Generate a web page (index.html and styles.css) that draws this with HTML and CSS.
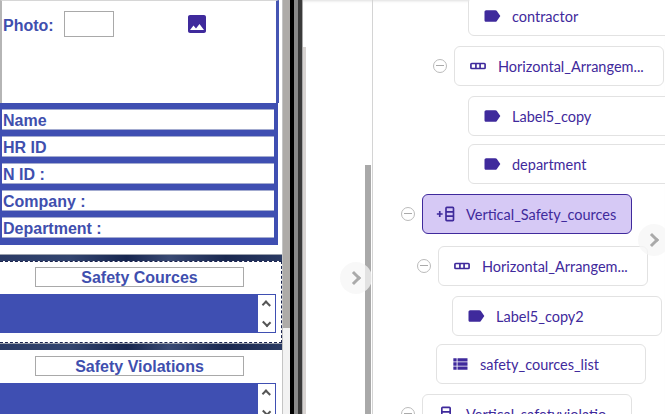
FILE: index.html
```html
<!DOCTYPE html>
<html lang="en">

<head>
  <meta charset="UTF-8" />
  <title>Safety form</title>
  <link rel="stylesheet" href="styles.css">
</head>

<body>
  <div class="page">
    <div class="form-pane">
      <div class="photo-box">
        <span class="field-label">Photo:</span>
        <span class="photo-input"></span>
        <svg class="photo-icon" viewBox="0 0 24 24" width="24" height="24">
          <path d="M21 19V5c0-1.100-.9-2-2-2H5c-1.100 0-2 .9-2 2v14c0 1.100.9 2 2 2h14c1.100 0 2-.9 2-2zM8.500 13.500l2.500 3.010L14.500 12l4.500 6H5l3.500-4.500z" />
        </svg>
      </div>
      <div class="fields">
        <div class="field-row">Name</div>
        <div class="field-row">HR ID</div>
        <div class="field-row">N ID :</div>
        <div class="field-row">Company :</div>
        <div class="field-row">Department :</div>
      </div>
      <div class="dark-band"></div>
      <div class="section selected">
        <div class="section-title">Safety Cources</div>
        <div class="list-box">
          <div class="list-scroll"><span class="arrow up"></span><span class="arrow down"></span></div>
        </div>
      </div>
      <div class="dark-band"></div>
      <div class="section">
        <div class="section-title">Safety Violations</div>
        <div class="list-box">
          <div class="list-scroll"><span class="arrow up"></span><span class="arrow down"></span></div>
        </div>
      </div>
    </div>

    <div class="pane-scroll"></div>
    <div class="splitter"></div>

    <div class="tree-pane">
      <div class="gutter">
        <div class="gutter-thumb"></div>
      </div>
      <div class="tree">
        <div class="node indent-95">
          <svg class="icon" viewBox="0 0 24 24"><use href="#ic-label" /></svg>
          <span>contractor</span>
        </div>
        <div class="node indent-81">
          <span class="toggle"></span>
          <svg class="icon" viewBox="0 0 24 24"><use href="#ic-hbox" /></svg>
          <span>Horizontal_Arrangem...</span>
        </div>
        <div class="node indent-95 gap-8">
          <svg class="icon" viewBox="0 0 24 24"><use href="#ic-label" /></svg>
          <span>Label5_copy</span>
        </div>
        <div class="node indent-95">
          <svg class="icon" viewBox="0 0 24 24"><use href="#ic-label" /></svg>
          <span>department</span>
        </div>
        <div class="node indent-49 active">
          <span class="toggle"></span>
          <svg class="icon" viewBox="0 0 24 24"><use href="#ic-vbox" /></svg>
          <span>Vertical_Safety_cources</span>
        </div>
        <div class="node indent-65">
          <span class="toggle"></span>
          <svg class="icon" viewBox="0 0 24 24"><use href="#ic-hbox" /></svg>
          <span>Horizontal_Arrangem...</span>
        </div>
        <div class="node indent-79 gap-8">
          <svg class="icon" viewBox="0 0 24 24"><use href="#ic-label" /></svg>
          <span>Label5_copy2</span>
        </div>
        <div class="node indent-63">
          <svg class="icon" viewBox="0 0 24 24"><use href="#ic-list" /></svg>
          <span>safety_cources_list</span>
        </div>
        <div class="node indent-49">
          <span class="toggle"></span>
          <svg class="icon" viewBox="0 0 24 24"><use href="#ic-vbox-plain" /></svg>
          <span>Vertical_safetyviolatio</span>
        </div>
      </div>
      <div class="pager pager-left"><span class="chev"></span></div>
      <div class="pager pager-right"><span class="chev"></span></div>
    </div>
  </div>

  <svg class="defs" width="0" height="0">
    <defs>
      <symbol id="ic-label" viewBox="0 0 24 24">
        <path fill="currentColor" d="M17.630 5.840C17.270 5.330 16.670 5 16 5L5 5.010C3.900 5.010 3 5.900 3 7v10c0 1.100.9 1.990 2 1.990L16 19c.67 0 1.270-.33 1.630-.84L22 12l-4.370-6.160z" />
      </symbol>
      <symbol id="ic-hbox" viewBox="0 0 24 24">
        <rect x="3.500" y="9" width="17" height="6" rx="1" fill="none" stroke="currentColor" stroke-width="2" />
        <path d="M9.500 9v6M14.500 9v6" stroke="currentColor" stroke-width="2" />
      </symbol>
      <symbol id="ic-vbox" viewBox="0 0 24 24">
        <rect x="12" y="4" width="9" height="16" rx="1" fill="none" stroke="currentColor" stroke-width="2" />
        <path d="M12 9.500h9M12 14.500h9M1 12h7M4.500 8.500v7" fill="none" stroke="currentColor" stroke-width="2" />
      </symbol>
      <symbol id="ic-vbox-plain" viewBox="0 0 24 24">
        <rect x="7" y="4" width="10" height="16" rx="1" fill="none" stroke="currentColor" stroke-width="2" />
        <path d="M7 9.500h10M7 14.500h10" fill="none" stroke="currentColor" stroke-width="2" />
      </symbol>
      <symbol id="ic-list" viewBox="0 0 24 24">
        <path fill="currentColor" d="M4 14h4v-4H4v4zm0 5h4v-4H4v4zM4 9h4V5H4v4zm5 5h12v-4H9v4zm0 5h12v-4H9v4zM9 5v4h12V5H9z" />
      </symbol>
    </defs>
  </svg>
</body>

</html>
```

FILE: styles.css
```css
html,
body {
  margin: 0;
  height: 100%;
  overflow: hidden;
  background: #fff;
}

.page {
  display: flex;
  width: 665px;
  height: 414px;
  overflow: hidden;
}

/* left form */
.form-pane {
  width: 282px;
  flex: none;
  border-right: 1px solid #c4c4c4;
  font-family: "Liberation Sans", Arial, sans-serif;
  font-weight: bold;
  color: #3f4fae;
  overflow: hidden;
}

.photo-box {
  display: flex;
  align-items: flex-start;
  width: 274px;
  height: 102px;
  border-top: 1px solid #d6d6d6;
  border-left: 2px solid #b5b5b5;
  border-right: 3px solid #4555b3;
  margin-right: 3px;
}

.field-label {
  margin: 16px 0 0 1px;
  font-size: 16px;
  line-height: 18px;
}

.photo-input {
  width: 48px;
  height: 24px;
  margin: 10px 0 0 10px;
  border: 1px solid #a9a9a9;
}

.photo-icon {
  margin: 11px 0 0 71px;
  fill: #3f2a9c;
}

.fields {
  display: flow-root;
  width: 278px;
  padding-top: 7px;
  background: #3f4fb2;
  box-sizing: border-box;
}

.field-row {
  width: 271px;
  height: 19px;
  margin: 0 3px 7px 2px;
  padding-left: 1px;
  background: #fff;
  border-bottom: 1px solid #a3abd0;
  box-shadow: 0 -1px 0 #a3abd0;
  font-size: 16px;
  line-height: 22px;
}

.dark-band {
  height: 6px;
  margin-top: 9px;
  border-top: 1px solid #9aa0ad;
  background: linear-gradient(to right, #2b3b66, #33456f 25%, #17264f 45%, #3a4a73 60%, #1a2850 80%, #2a3a63);
}

.section + .dark-band {
  margin-top: 0;
}

.section {
  height: 80px;
  padding-top: 6px;
  box-sizing: border-box;
}

.section.selected {
  border-top: 1px dashed #1c2550;
  border-bottom: 1px dashed #1c2550;
  border-right: 1px dashed #1c2550;
  height: 82px;
  padding-top: 5px;
}

.section-title {
  width: 207px;
  height: 18px;
  margin-left: 35px;
  border: 1px solid #a9a9a9;
  font-size: 16px;
  line-height: 20px;
  text-align: center;
}

.list-box {
  display: flex;
  justify-content: flex-end;
  width: 276px;
  height: 39px;
  margin-top: 7px;
  background: #3f4fb2;
}

.list-scroll {
  display: flex;
  flex-direction: column;
  justify-content: space-between;
  align-items: center;
  width: 17px;
  height: 35px;
  padding: 1px 0;
  border: 1px solid #3f4fb2;
  border-left: 0;
  background: #fff;
}

.arrow {
  width: 5px;
  height: 5px;
  margin: 6px 0;
  border-top: 2px solid #555;
  border-left: 2px solid #555;
}

.arrow.up {
  transform: rotate(45deg);
}

.arrow.down {
  transform: rotate(225deg);
}

/* scrollbar and splitter */
.pane-scroll {
  width: 7px;
  flex: none;
  background: linear-gradient(to bottom, #aeaba8 0, #aeaba8 328px, #f2f2f2 328px);
}

.splitter {
  width: 13px;
  flex: none;
  background: linear-gradient(to right, #000 0 4px, #8a8a8a 4px 8px, #3a3a3a 8px 12px, #aaa 12px 13px);
}

/* tree */
.tree-pane {
  position: relative;
  flex: 1;
  display: flex;
  overflow: hidden;
  font-family: Lato, "Noto Sans", sans-serif;
  color: #3f2a9c;
  box-shadow: inset 0 3px 3px -2px #ddd;
}

.gutter {
  width: 70px;
  flex: none;
  box-sizing: border-box;
  padding: 165px 0 0 62px;
  border-right: 1px solid #d4d4d4;
  background: linear-gradient(#d8d4d2, #d8d4d2) no-repeat 0 47px / 3px 100%;
}

.gutter-thumb {
  width: 6px;
  height: 100%;
  background: #a9a9a9;
}

.tree {
  flex: 1;
  margin-top: -4px;
}

.node {
  position: relative;
  display: flex;
  align-items: center;
  gap: 10px;
  width: 210px;
  height: 40px;
  margin-bottom: 10px;
  padding-left: 13px;
  box-sizing: border-box;
  background: #fff;
  border: 1px solid #e2e2e2;
  border-radius: 6px;
  font-size: 14.500px;
  white-space: nowrap;
}

.node.gap-8 {
  margin-bottom: 8px;
}

.node.active {
  background: #d6c9f5;
  border-color: #3f2a9c;
  margin-bottom: 12px;
}

.indent-49 {
  margin-left: 49px;
}

.indent-63 {
  margin-left: 63px;
}

.indent-65 {
  margin-left: 65px;
}

.indent-79 {
  margin-left: 79px;
}

.indent-81 {
  margin-left: 81px;
}

.indent-95 {
  margin-left: 95px;
}

.icon {
  width: 20px;
  height: 20px;
  flex: none;
}

.toggle {
  position: absolute;
  left: -22px;
  top: 12px;
  width: 14px;
  height: 14px;
  box-sizing: border-box;
  border: 1px solid #bbb;
  border-radius: 50%;
}

.toggle::after {
  content: "";
  position: absolute;
  left: 2px;
  right: 2px;
  top: 5px;
  height: 1px;
  background: #aaa;
}

.pager {
  position: absolute;
  width: 32px;
  height: 32px;
  border-radius: 50%;
  background: rgba(245, 245, 245, 0.75);
}

.pager-left {
  left: 37px;
  top: 262px;
}

.pager-right {
  left: 335px;
  top: 224px;
}

.chev {
  position: absolute;
  left: 9px;
  top: 11px;
  width: 7px;
  height: 7px;
  border-top: 3px solid #aaa;
  border-right: 3px solid #aaa;
  transform: rotate(45deg);
}

.defs {
  position: absolute;
}
```
